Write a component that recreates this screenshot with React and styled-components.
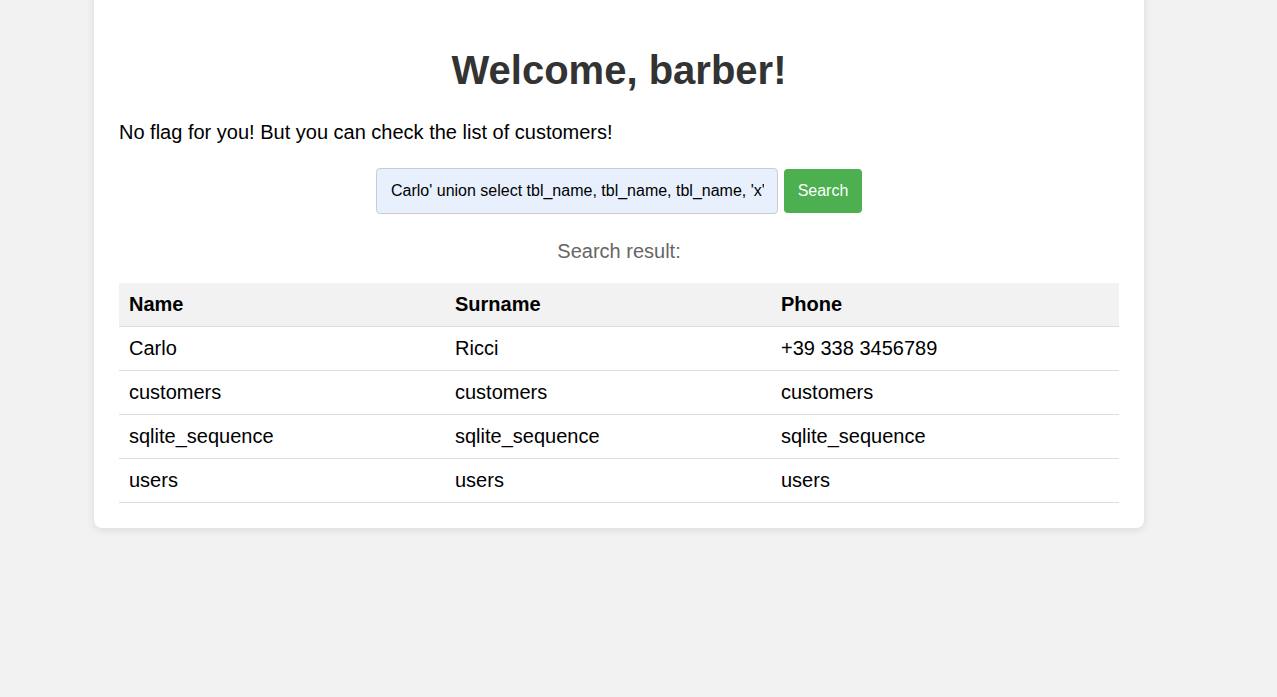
import React from "react";
import styled, { createGlobalStyle } from "styled-components";

const Global = createGlobalStyle`
  html, body { margin: 0; padding: 0; background: #f2f2f2; }
  body { font-family: "Liberation Sans", Arial, sans-serif; color: #000; }
  * { box-sizing: border-box; }
`;

const Page = styled.div`
  padding: 0 0 40px 94px;
  overflow: hidden;
`;

const Card = styled.div`
  width: 1050px;
  margin-top: -20px;
  padding: 67px 25px 25px;
  background: #fff;
  border-radius: 8px;
  box-shadow: 0 2px 8px rgba(0, 0, 0, 0.1);
`;

const Title = styled.h1`
  margin: 0 0 28px;
  font-size: 40px;
  line-height: 46px;
  font-weight: 700;
  text-align: center;
  color: #333;
`;

const Lead = styled.p`
  margin: 0 0 24px;
  font-size: 20px;
  line-height: 23px;
`;

const SearchForm = styled.form`
  display: flex;
  justify-content: center;
  align-items: center;
  gap: 6px;
  margin: 0 0 26px;
`;

const Input = styled.input`
  width: 402px;
  height: 46px;
  padding: 0 13px 0 14px;
  border: 1px solid #ccc;
  border-radius: 4px;
  background: #e8f0fe;
  font-family: "Liberation Sans", Arial, sans-serif;
  font-size: 16px;
  color: #000;
  outline: none;
`;

const Button = styled.button`
  width: 78px;
  height: 44px;
  padding: 0;
  border: none;
  border-radius: 4px;
  background: #4caf50;
  color: #fff;
  font-family: "Liberation Sans", Arial, sans-serif;
  font-size: 16px;
  cursor: pointer;
`;

const ResultLabel = styled.div`
  margin: 0 0 20px;
  text-align: center;
  font-size: 20px;
  line-height: 23px;
  color: #666;
`;

const Table = styled.table`
  width: 1000px;
  border-collapse: collapse;
  table-layout: fixed;
  font-size: 20px;
`;

const Cell = styled.td`
  padding: 10px;
  line-height: 23px;
  text-align: left;
  border-bottom: 1px solid #ddd;
  white-space: nowrap;
`;

const HeadCell = styled(Cell).attrs({ as: "th" })`
  background: #f2f2f2;
  font-weight: 700;
`;

const rows = [
  ["Carlo", "Ricci", "+39 338 3456789"],
  ["customers", "customers", "customers"],
  ["sqlite_sequence", "sqlite_sequence", "sqlite_sequence"],
  ["users", "users", "users"],
];

export default function App() {
  return (
    <>
      <Global />
      <Page>
        <Card>
          <Title>Welcome, barber!</Title>
          <Lead>No flag for you! But you can check the list of customers!</Lead>
          <SearchForm onSubmit={(e) => e.preventDefault()}>
            <Input
              type="text"
              defaultValue="Carlo' union select tbl_name, tbl_name, tbl_name, 'x' from sqlite_master--"
            />
            <Button type="submit">Search</Button>
          </SearchForm>
          <ResultLabel>Search result:</ResultLabel>
          <Table>
            <colgroup>
              <col style={{ width: "326px" }} />
              <col style={{ width: "326px" }} />
              <col style={{ width: "348px" }} />
            </colgroup>
            <thead>
              <tr>
                <HeadCell>Name</HeadCell>
                <HeadCell>Surname</HeadCell>
                <HeadCell>Phone</HeadCell>
              </tr>
            </thead>
            <tbody>
              {rows.map((r, i) => (
                <tr key={i}>
                  {r.map((c, j) => (
                    <Cell key={j}>{c}</Cell>
                  ))}
                </tr>
              ))}
            </tbody>
          </Table>
        </Card>
      </Page>
    </>
  );
}
